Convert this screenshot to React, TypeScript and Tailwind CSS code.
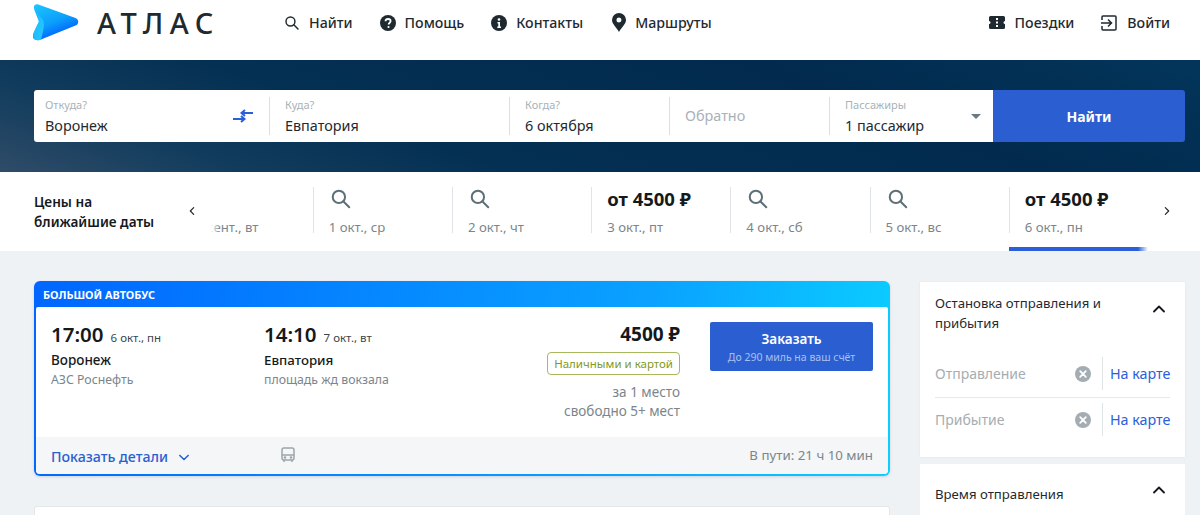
import React from "react";

const F = { fontFamily: '"Noto Sans", sans-serif' };

function Logo() {
  return (
    <svg width="46" height="42" viewBox="0 0 46 42" className="block">
      <defs>
        <linearGradient id="lg1" x1="0.1" y1="0" x2="0.6" y2="1">
          <stop offset="0" stopColor="#1cc4ff" />
          <stop offset="0.55" stopColor="#0b9dfb" />
          <stop offset="1" stopColor="#0050ff" />
        </linearGradient>
        <linearGradient id="lg2" x1="0" y1="0" x2="1" y2="1">
          <stop offset="0" stopColor="#10b8ff" />
          <stop offset="1" stopColor="#2fd0ff" />
        </linearGradient>
      </defs>
      <path d="M1 4.500C.3 1.500 2.600-.3 5.400.5L42.500 14c3.600 1.400 3.600 6 0 7.600L8 35.600c-3 1.200-6 .6-7.400-1-1-1.400-.8-3.500 0-5.600L6 17.500Z" fill="url(#lg1)" />
      <path d="M1 4.500 L10 16 C12 21 10 28 8 35.600 C4.500 37 1.200 36 .4 33 C-.4 30 1.500 26.500 6 17.500 Z" fill="url(#lg2)" opacity="0.9" />
    </svg>
  );
}

function SearchIcon({ className = "" }: { className?: string }) {
  return (
    <svg viewBox="0 0 24 24" className={className} fill="none" stroke="currentColor" strokeWidth="2.200" strokeLinecap="round">
      <circle cx="9.700" cy="9.700" r="6.700" />
      <path d="M14.700 14.700 21 21" />
    </svg>
  );
}

function NavItem({ icon, label, gap = "gap-[9px]" }: { icon: React.ReactNode; label: string; gap?: string }) {
  return (
    <div className={`flex items-center ${gap} text-[14.200px] font-medium text-[#1f2a30] leading-5`}>
      {icon}
      <span>{label}</span>
    </div>
  );
}

function Field({ label, value, w, first, arrows, caret }: { label: string; value: string; w: string; first?: boolean; arrows?: boolean; caret?: boolean }) {
  return (
    <div className={`relative h-[38px] ${w} ${first ? "pl-[11px]" : "border-l border-[#d9dfe3] pl-[15px]"} shrink-0`}>
      <div className="text-[11px] leading-[14px] text-[#a9b2b8] pt-[2px] -mt-[1px]">{label}</div>
      <div className="text-[14.400px] leading-5 text-[#1f2a30] mt-[4px]">{value}</div>
      {arrows && (
        <svg viewBox="0 0 20 14" className="absolute left-[199px] top-[12px] w-5 h-[14px]" fill="none" stroke="#2b5fd9" strokeWidth="2">
          <path d="M0 10h11M8 7l3.500 3L8 13" />
          <path d="M20 4H9M12 1 8.500 4 12 7" />
        </svg>
      )}
      {caret && <div className="absolute right-[12px] top-[17px] w-0 h-0 border-l-[5px] border-r-[5px] border-t-[5px] border-l-transparent border-r-transparent border-t-[#6b7a82]" />}
    </div>
  );
}

function DateCell({ date, price, active, first }: { date: string; price?: boolean; active?: boolean; first?: boolean }) {
  return (
    <div className="relative w-[139.200px] shrink-0 h-[79px] pt-[17px]">
      <div className={`h-[46px] pl-[15px] ${first ? "" : "border-l border-[#dfe4e7]"}`}>
        <div className="h-[27px] flex items-center -mt-[2px]">
          {price ? (
            <span className="text-[18.500px] font-bold text-[#14191c] leading-6 -mt-[4px]">от 4500 ₽</span>
          ) : (
            <SearchIcon className="w-[22px] h-[22px] text-[#5f6f78] ml-[1px] -mt-[3px]" />
          )}
        </div>
        <div className="text-[13.200px] leading-4 text-[#7b868c] mt-[5px] whitespace-nowrap">{date}</div>
      </div>
      {active && <div className="absolute left-0 right-0 bottom-0 h-[4px] bg-[#2b5fd9]" />}
    </div>
  );
}

function Stop({ label }: { label: string }) {
  return (
    <div className="flex items-center h-[33px]">
      <span className="flex-1 text-[14px] text-[#a6adb2]">{label}</span>
      <svg viewBox="0 0 16 16" className="w-4 h-4 mr-[11px]">
        <circle cx="8" cy="8" r="8" fill="#a3adb3" />
        <path d="M5.200 5.200l5.600 5.600M10.800 5.200l-5.600 5.600" stroke="#fff" strokeWidth="1.800" strokeLinecap="round" />
      </svg>
      <div className="border-l border-[#dfe4e7] pl-[7px] h-[33px] w-[68px] flex items-center text-[14.300px] text-[#2b5fd9] whitespace-nowrap">На карте</div>
    </div>
  );
}

function Chevron({ up, className = "" }: { up?: boolean; className?: string }) {
  return (
    <svg viewBox="0 0 12 8" className={className} fill="none" stroke="currentColor" strokeWidth="1.800" strokeLinecap="round" strokeLinejoin="round">
      <path d={up ? "M1 6.500 6 1.500l5 5" : "M1 1.500l5 5 5-5"} />
    </svg>
  );
}

export default function App() {
  return (
    <div style={F} className="h-[515px] w-[1200px] overflow-hidden bg-[#eff2f5]">
      <header className="h-[60px] bg-white flex items-center pl-[33px] pr-[30px]">
        <div className="w-[46px] -mt-[10px]"><Logo /></div>
        <div className="ml-[18px] w-[187px] -mt-[15px] text-[29px] font-medium tracking-[6.600px] text-[#1f2a30] leading-8">АТЛАС</div>
        <div className="flex items-center -mt-[15px] gap-[27px]">
          <NavItem label="Найти" icon={<SearchIcon className="w-4 h-4 text-[#1f2a30]" />} />
          <NavItem
            label="Помощь"
            icon={
              <svg viewBox="0 0 16 16" className="w-4 h-4">
                <circle cx="8" cy="8" r="8" fill="#1f2a30" />
                <path d="M5.500 6.200C5.600 4.700 6.600 4 8 4c1.500 0 2.600.8 2.600 2.100 0 1.900-2 1.800-2 3.300" stroke="#fff" strokeWidth="1.800" fill="none" />
                <circle cx="8.500" cy="12" r="1.100" fill="#fff" />
              </svg>
            }
          />
          <NavItem
            label="Контакты"
            icon={
              <svg viewBox="0 0 16 16" className="w-4 h-4">
                <circle cx="8" cy="8" r="8" fill="#1f2a30" />
                <circle cx="8" cy="4.500" r="1.300" fill="#fff" />
                <path d="M6.500 7h2.500v4.500h1V13H6.300v-1.500h1V8.500H6.500Z" fill="#fff" />
              </svg>
            }
          />
          <NavItem
            label="Маршруты"
            icon={
              <svg viewBox="0 0 14 19" className="w-[14px] h-[19px] ml-[2px]">
                <path fillRule="evenodd" d="M7 0a7 7 0 0 1 7 7c0 4-4.500 7.500-7 12C4.500 14.500 0 11 0 7a7 7 0 0 1 7-7Zm0 4.500a2.500 2.500 0 1 0 0 5 2.500 2.500 0 0 0 0-5Z" fill="#1f2a30" />
              </svg>
            }
          />
        </div>
        <div className="ml-auto flex items-center -mt-[15px] gap-[27px]">
          <NavItem
            label="Поездки"
            gap="gap-[10px]"
            icon={
              <svg viewBox="0 0 16 13" className="w-4 h-[13px]">
                <path fillRule="evenodd" d="M1.500 0h13A1.500 1.500 0 0 1 16 1.500V5a1.500 1.500 0 0 0 0 3v3.500a1.500 1.500 0 0 1-1.500 1.500h-13A1.500 1.500 0 0 1 0 11.500V8a1.500 1.500 0 0 0 0-3V1.500A1.500 1.500 0 0 1 1.500 0ZM7 2v2h2V2Zm0 3.500v2h2v-2ZM7 9v2h2V9Z" fill="#1f2a30" />
              </svg>
            }
          />
          <NavItem
            label="Войти"
            gap="gap-[10px]"
            icon={
              <svg viewBox="0 0 16 16" className="w-4 h-4" fill="none" stroke="#1f2a30" strokeWidth="1.500">
                <path d="M1 5V2a1 1 0 0 1 1-1h12a1 1 0 0 1 1 1v12a1 1 0 0 1-1 1H2a1 1 0 0 1-1-1v-3" />
                <path d="M0 8h10M7 4.500 10.500 8 7 11.500" />
              </svg>
            }
          />
        </div>
      </header>

      <section className="h-[112px] pt-[30px] px-[34px] bg-[linear-gradient(20deg,#2f4c68_0%,#123c5d_16%,#043053_34%,#012a4e_70%,#03355a_100%)]">
        <div className="h-[52px] w-[1151px] flex">
          <div className="flex-1 bg-white rounded-l-[3px] flex items-center">
            <Field first label="Откуда?" value="Воронеж" w="w-[235px]" arrows />
            <Field label="Куда?" value="Евпатория" w="w-[240px]" />
            <Field label="Когда?" value="6 октября" w="w-[160px]" />
            <div className="w-[160px] h-[38px] border-l border-[#d9dfe3] pl-[15px] flex items-center text-[14.400px] text-[#a9b2b8] shrink-0">Обратно</div>
            <Field label="Пассажиры" value="1 пассажир" w="w-[164px]" caret />
          </div>
          <div className="w-[192px] bg-[#2b5fd1] rounded-r-[3px] flex items-center justify-center text-white text-[14px] font-bold">Найти</div>
        </div>
      </section>

      <section className="h-[79px] bg-white flex">
        <div className="w-[155px] pl-[34px] pt-[20px] text-[13.600px] font-semibold leading-[20px] text-[#14191c] shrink-0">
          Цены на
          <br />
          ближайшие даты
        </div>
        <div className="relative z-10 w-[21px] flex items-center justify-center shrink-0 ml-[26px] pb-[2px] text-[#1f2a30]">
          <Chevron className="w-2 h-[10px] rotate-90" />
        </div>
        <div className="relative overflow-hidden w-[974px] shrink-0 ml-[-28px]">
          <div className="flex -ml-[0.400px]">
            <DateCell first date="30 сент., вт" />
            <DateCell date="1 окт., ср" />
            <DateCell date="2 окт., чт" />
            <DateCell price date="3 окт., пт" />
            <DateCell date="4 окт., сб" />
            <DateCell date="5 окт., вс" />
            <DateCell price active date="6 окт., пн" />
          </div>
          <div className="absolute left-0 top-0 bottom-0 w-[46px] bg-[linear-gradient(90deg,#fff_80%,rgba(255,255,255,0))]" />
          <div className="absolute right-0 top-0 bottom-0 w-[10px] bg-[linear-gradient(270deg,#fff,rgba(255,255,255,0))]" />
        </div>
        <div className="w-[37px] flex items-center justify-center pb-[2px] text-[#1f2a30]">
          <Chevron className="w-2 h-[10px] -rotate-90" />
        </div>
      </section>

      <main className="flex pl-[34px] pt-[30px] gap-[30px]">
        <div className="w-[856px] shrink-0">
          <div className="h-[195px] rounded-[6px] p-[2px] pt-0 bg-[linear-gradient(100deg,#0066ff_0%,#0aa2ff_70%,#0bd0ff_100%)] flex flex-col shadow-[0_1px_3px_rgba(0,40,90,0.15)]">
            <div className="h-[26px] pl-[7px] pt-[3px] flex items-center text-[10.900px] font-bold text-white">БОЛЬШОЙ АВТОБУС</div>
            <div className="flex-1 bg-white rounded-b-[4px] rounded-t-[2px] flex flex-col overflow-hidden">
              <div className="flex-1 flex pt-[15px] pl-[15px] pr-[15px]">
                <div className="w-[213px] shrink-0">
                  <div className="flex items-baseline gap-[7px] -mt-[1px]">
                    <span className="text-[20.500px] font-semibold leading-[27px] text-[#14191c]">17:00</span>
                    <span className="text-[11.500px] text-[#3b464c]">6 окт., пн</span>
                  </div>
                  <div className="text-[13.500px] font-medium leading-[19px] mt-[3px] text-[#14191c]">Воронеж</div>
                  <div className="text-[12.300px] leading-[20px] text-[#7b868c]">АЗС Роснефть</div>
                </div>
                <div className="flex-1">
                  <div className="flex items-baseline gap-[7px] -mt-[1px]">
                    <span className="text-[20.500px] font-semibold leading-[27px] text-[#14191c]">14:10</span>
                    <span className="text-[11.500px] text-[#3b464c]">7 окт., вт</span>
                  </div>
                  <div className="text-[13.300px] font-medium leading-[19px] mt-[3px] text-[#14191c]">Евпатория</div>
                  <div className="text-[12.300px] leading-[20px] text-[#7b868c]">площадь жд вокзала</div>
                </div>
                <div className="flex flex-col items-end w-[140px] mr-[30px]">
                  <div className="text-[19px] font-bold leading-6 text-[#14191c]">4500 ₽</div>
                  <div className="mt-[6px] h-[23px] px-[6px] border border-[#a6b95c] rounded-[4px] flex items-center text-[11.500px] text-[#7f9a22] whitespace-nowrap">Наличными и картой</div>
                  <div className="mt-[8px] text-[13.500px] leading-[19px] text-[#7b868c] text-right whitespace-nowrap">
                    за 1 место
                    <br />
                    свободно 5+ мест
                  </div>
                </div>
                <div className="w-[163px] h-[49px] shrink-0 rounded-[2px] bg-[#2b5fd1] flex flex-col items-center justify-center">
                  <div className="text-[13.500px] font-semibold leading-[18px] text-white pt-[1px]">Заказать</div>
                  <div className="text-[10.500px] leading-[16px] mt-[1px] text-[#a9c0ef]">До 290 миль на ваш счёт</div>
                </div>
              </div>
              <div className="h-[37px] bg-[#f4f6f7] flex items-center pl-[15px] pr-[15px] pt-[3px]">
                <span className="text-[14.200px] font-medium text-[#2b5fd1]">Показать детали</span>
                <Chevron className="w-[10px] h-[7px] ml-[11px] text-[#2b5fd1]" />
                <svg viewBox="0 0 14 16" className="w-[14px] h-4 ml-[92px] -mt-[5px]" fill="none" stroke="#9aa5ab" strokeWidth="1.500">
                  <rect x="1" y="1" width="12" height="12" rx="2" />
                  <path d="M1 8h12M3 13v2M11 13v2" />
                  <circle cx="4" cy="10.500" r=".6" fill="#9aa5ab" />
                  <circle cx="10" cy="10.500" r=".6" fill="#9aa5ab" />
                </svg>
                <span className="ml-auto text-[13.300px] text-[#7b868c] -mt-[2px]">В пути: 21 ч 10 мин</span>
              </div>
            </div>
          </div>
          <div className="mt-[30px] h-[40px] bg-white rounded-[3px] border border-[#e3e8eb]" />
        </div>

        <aside className="w-[265px] shrink-0">
          <div className="h-[175px] bg-white px-[15px] pt-[11px] mt-[1px] shadow-[0_0_2px_rgba(0,40,90,0.08)]">
            <div className="flex items-center">
              <div className="flex-1 text-[13.200px] leading-[20px] text-[#1f2a30]">
                Остановка отправления и
                <br />
                прибытия
              </div>
              <Chevron up className="w-3 h-2 mr-[5px] -mt-[8px] text-[#14191c]" />
            </div>
            <div className="mt-[24px]">
              <Stop label="Отправление" />
              <div className="border-t border-[#e3e8eb] mt-[7px] mb-[5px]" />
              <Stop label="Прибытие" />
            </div>
          </div>
          <div className="mt-[7px] h-[60px] bg-white px-[15px] pt-[20px] flex items-start">
            <div className="flex-1 text-[13.200px] leading-[20px] text-[#1f2a30]">Время отправления</div>
            <Chevron up className="w-3 h-2 mr-[5px] mt-[2px] text-[#14191c]" />
          </div>
        </aside>
      </main>
    </div>
  );
}
